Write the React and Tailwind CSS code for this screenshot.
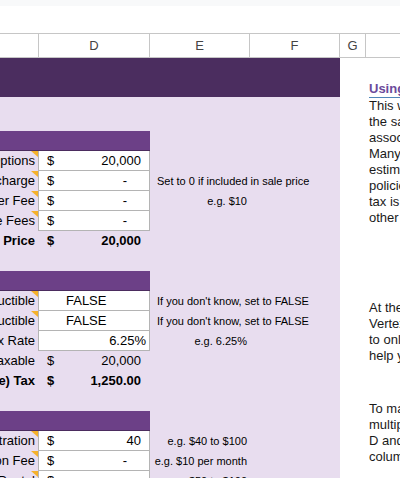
import React from 'react';

const Tri = () => (
    <span className="absolute top-0 right-0 w-0 h-0 border-t-[6px] border-l-[7px] border-t-[#f5b12a] border-l-transparent" />
);

const Row = ({ label, tri = false, bold = false, boxed = false, dollar = false, value, left = false, valueClass = 'pr-[8px]', note, noteLong = false }) => (
    <div className={`flex h-[20px] ${bold ? 'font-bold' : ''}`}>
        <div className="relative w-[38px] flex items-center justify-end overflow-hidden whitespace-nowrap pr-[3px]">
            {label}
            {tri && <Tri />}
        </div>
        <div
            className={`w-[112px] flex items-center border-x ${
                boxed ? 'bg-white border-b border-[#b4b4b4]' : 'border-transparent'
            }`}
        >
            {dollar && <span className="pl-[8px]">$</span>}
            {left ? <span className="pl-[27px]">{value}</span> : <span className={`ml-auto ${valueClass}`}>{value}</span>}
        </div>
        {note && (
            <div className="flex items-center text-[11px] whitespace-nowrap">
                {noteLong ? (
                    <span className="pl-[7px]">{note}</span>
                ) : (
                    <span className="w-[100px] text-right pr-[3px]">{note}</span>
                )}
            </div>
        )}
    </div>
);

const Header = () => <div className="w-[150px] h-[20px] bg-[#6c4087] border-b border-[#4b2c5e]" />;

const Blank = () => <div className="h-[20px]" />;

const para1 = [
    'This worksheet calculates',
    'the sales tax and fees',
    'associated with buying a car.',
    'Many states use the sale',
    'estimate. Check local',
    'policies to see how sales',
    'tax is applied to trade-ins',
    'other credits or rebates.',
];

const para2 = ['At the bottom, the', 'Vertex tax lookup links', 'to online rate tables to', 'help you find your rate.'];

const para3 = ['To make a comparison of', 'multiple vehicles, copy', 'D and E into new', 'columns to the right.'];

const Lines = ({ lines }) => (
    <div className="leading-[16px]">
        {lines.map((l) => (
            <div key={l} className="whitespace-nowrap">
                {l}
            </div>
        ))}
    </div>
);

export default function App() {
    return (
        <div className="w-[400px] h-[478px] overflow-hidden bg-white text-[13px] text-black font-['Liberation_Sans',Arial,sans-serif]">
            <div className="h-[6px] bg-[#f8f9fa]" />
            <div className="h-[27px]" />

            {/* column letters */}
            <div className="flex h-[25px] border-y border-[#c6c6c6] text-[13px] text-[#444]">
                <div className="w-[39px] border-r border-[#c6c6c6]" />
                <div className="w-[111px] border-r border-[#c6c6c6] flex items-center justify-center">D</div>
                <div className="w-[100px] border-r border-[#c6c6c6] flex items-center justify-center">E</div>
                <div className="w-[90px] border-r border-[#c6c6c6] flex items-center justify-center">F</div>
                <div className="w-[26px] border-r border-[#c6c6c6] flex items-center justify-center">G</div>
                <div className="flex-1" />
            </div>

            <div className="flex h-[420px]">
                {/* sheet */}
                <div className="w-[340px] flex flex-col">
                    <div className="h-[39px] shrink-0 bg-[#4b2d5f]" />
                    <div className="flex-1 min-h-0 overflow-hidden bg-[#e8ddef] pt-[34px]">
                        <Header />
                        <Row label="Price with Options" tri boxed dollar value="20,000" />
                        <Row label="Destination Surcharge" tri boxed dollar value="-" valueClass="pr-[22px]" note="Set to 0 if included in sale price" noteLong />
                        <Row label="Dealer Fee" tri boxed dollar value="-" valueClass="pr-[22px]" note="e.g. $10" />
                        <Row label="License Fees" tri boxed dollar value="-" valueClass="pr-[22px]" />
                        <Row label="Total Price" bold dollar value="20,000" />
                        <Blank />

                        <Header />
                        <Row label="Trade-in Deductible" tri boxed left value="FALSE" note="If you don't know, set to FALSE" noteLong />
                        <Row label="Rebate Deductible" tri boxed left value="FALSE" note="If you don't know, set to FALSE" noteLong />
                        <Row label="Sales Tax Rate" boxed value="6.25%" valueClass="pr-[3px]" note="e.g. 6.25%" />
                        <Row label="Amount Taxable" dollar value="20,000" />
                        <Row label="Sales (Estimate) Tax" bold dollar value="1,250.00" />
                        <Blank />

                        <Header />
                        <Row label="Registration" tri boxed dollar value="40" note="e.g. $40 to $100" />
                        <Row label="Inspection Fee" tri boxed dollar value="-" valueClass="pr-[22px]" note="e.g. $10 per month" />
                        <Row label="Plate Rental" tri boxed dollar value="-" valueClass="pr-[22px]" note="e.g. $50 to $100" />
                    </div>
                </div>

                {/* column G */}
                <div className="w-[26px]" />

                {/* notes panel */}
                <div className="flex-1 overflow-hidden pl-[3px] pt-[23px] text-[#1a1a1a]">
                    <div className="h-[17px] leading-[16px] border-b border-[#4f86b9] font-bold text-[#6b4a9b] whitespace-nowrap">
                        Using the Calculator
                    </div>
                    <Lines lines={para1} />
                    <div className="mt-[74px]">
                        <Lines lines={para2} />
                    </div>
                    <div className="mt-[37px]">
                        <Lines lines={para3} />
                    </div>
                </div>
            </div>
        </div>
    );
}
